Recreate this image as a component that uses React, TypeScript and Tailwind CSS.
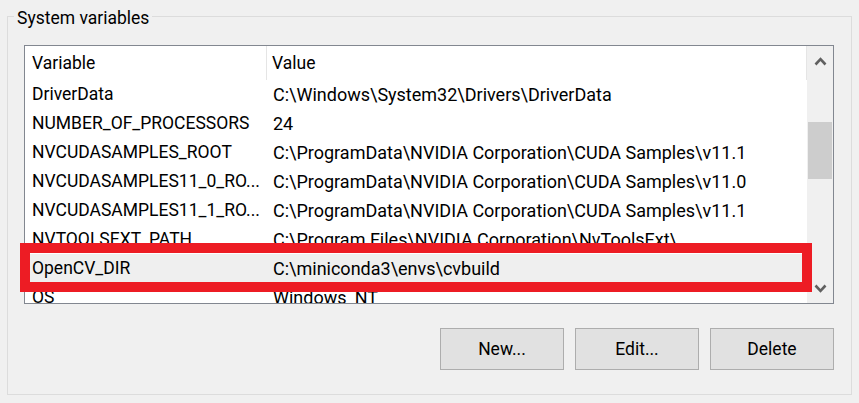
import React from "react";

const rows: [string, string][] = [
  ["DriverData", "C:\\Windows\\System32\\Drivers\\DriverData"],
  ["NUMBER_OF_PROCESSORS", "24"],
  ["NVCUDASAMPLES_ROOT", "C:\\ProgramData\\NVIDIA Corporation\\CUDA Samples\\v11.1"],
  ["NVCUDASAMPLES11_0_RO...", "C:\\ProgramData\\NVIDIA Corporation\\CUDA Samples\\v11.0"],
  ["NVCUDASAMPLES11_1_RO...", "C:\\ProgramData\\NVIDIA Corporation\\CUDA Samples\\v11.1"],
  ["NVTOOLSEXT_PATH", "C:\\Program Files\\NVIDIA Corporation\\NvToolsExt\\"],
  ["OpenCV_DIR", "C:\\miniconda3\\envs\\cvbuild"],
  ["OS", "Windows_NT"],
];

export default function App() {
  return (
    <div
      className="w-[859px] h-[403px] bg-[#f0f0f0] overflow-hidden text-black"
      style={{ fontFamily: 'Roboto, "Liberation Sans", Arial, sans-serif' }}
    >
      <div className="pt-[16px] pl-[7px]">
        <div className="relative w-[845px] h-[379px] border border-[#dcdcdc]">
          <span className="absolute left-[6px] top-[-10px] px-[3px] bg-[#f0f0f0] text-[17.5px] leading-[22px]">
            System variables
          </span>
          <div className="ml-[16px] mt-[28px] w-[810px] h-[259px] border border-[#828790] bg-white flex overflow-hidden">
            <div className="relative w-[782px] h-full overflow-hidden text-[17.5px]">
              <div className="flex h-[34px] items-center">
                <div className="w-[242px] h-full flex items-center pl-[7px] border-r border-[#e5e5e5]">Variable</div>
                <div className="flex-1 h-full flex items-center pl-[5px] border-r border-[#e5e5e5]">Value</div>
              </div>
              {rows.map(([k, v]) => (
                <div
                  key={k}
                  className={`flex h-[29px] items-center whitespace-nowrap ${k === "OpenCV_DIR" ? "bg-[#efefef]" : ""}`}
                >
                  <div className="w-[242px] pl-[7px] overflow-hidden">{k}</div>
                  <div className="flex-1 pl-[6px] text-[18px]">{v}</div>
                </div>
              ))}
            </div>
            <div className="w-[26px] h-full bg-[#f0f0f0] flex flex-col items-center">
              <div className="h-[30px] w-full flex items-center justify-center">
                <svg width="13" height="9" viewBox="0 0 13 9">
                  <path d="M1.5 7.5 L6.5 2.2 L11.5 7.5" fill="none" stroke="#606060" strokeWidth="2.6" />
                </svg>
              </div>
              <div className="mt-[46px] w-[24px] h-[57px] bg-[#cdcdcd]" />
              <div className="flex-1" />
              <div className="h-[30px] w-full flex items-center justify-center">
                <svg width="13" height="9" viewBox="0 0 13 9">
                  <path d="M1.5 1.5 L6.5 6.8 L11.5 1.5" fill="none" stroke="#606060" strokeWidth="2.6" />
                </svg>
              </div>
            </div>
          </div>
          <div className="ml-[432px] mt-[24px] flex gap-[11px] text-[17.5px]">
            {["New...", "Edit...", "Delete"].map((t) => (
              <div
                key={t}
                className="w-[124px] h-[42px] bg-[#e1e1e1] border border-[#adadad] flex items-center justify-center"
              >
                {t}
              </div>
            ))}
          </div>
          <div className="absolute left-[12px] top-[226px] w-[792px] h-[49px] border-[10px] border-[#ed1c24]" />
        </div>
      </div>
    </div>
  );
}
